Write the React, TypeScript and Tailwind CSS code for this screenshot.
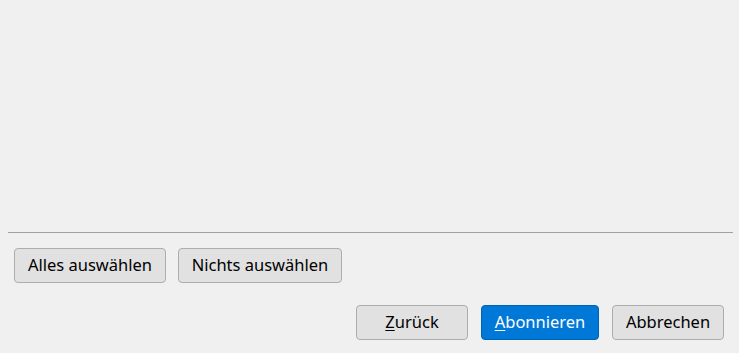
import React from 'react';

const font = { fontFamily: '"Noto Sans", "Open Sans", sans-serif' };

function DlgButton({ children, width, primary }: { children: React.ReactNode; width: string; primary?: boolean }) {
    const tone = primary
        ? 'bg-[#0078d7] border-[#0063b1] text-white'
        : 'bg-[#e1e1e1] border-[#adadad] text-black';
    return (
        <button
            type="button"
            className={`h-[35px] ${width} rounded-[4px] border ${tone} flex items-center justify-center text-[16.5px] leading-none`}
        >
            {children}
        </button>
    );
}

export default function App() {
    return (
        <div className="w-[739px] h-[353px] bg-[#f0f0f0] flex flex-col" style={font}>
            {/* leerer Inhaltsbereich */}
            <div className="flex-1" />

            <div className="mx-2 h-px bg-[#a0a0a0] mr-[6px]" />

            <div className="flex gap-3 px-[14px] mt-[15px]">
                <DlgButton width="w-[152px]">Alles auswählen</DlgButton>
                <DlgButton width="w-[164px]">Nichts auswählen</DlgButton>
            </div>

            <div className="flex justify-end gap-[13px] pr-[15px] mt-[22px] mb-[13px]">
                <DlgButton width="w-[112px]"><span><span className="underline underline-offset-2">Z</span>urück</span></DlgButton>
                <DlgButton width="w-[118px]" primary><span><span className="underline underline-offset-2">A</span>bonnieren</span></DlgButton>
                <DlgButton width="w-[112px]">Abbrechen</DlgButton>
            </div>
        </div>
    );
}
